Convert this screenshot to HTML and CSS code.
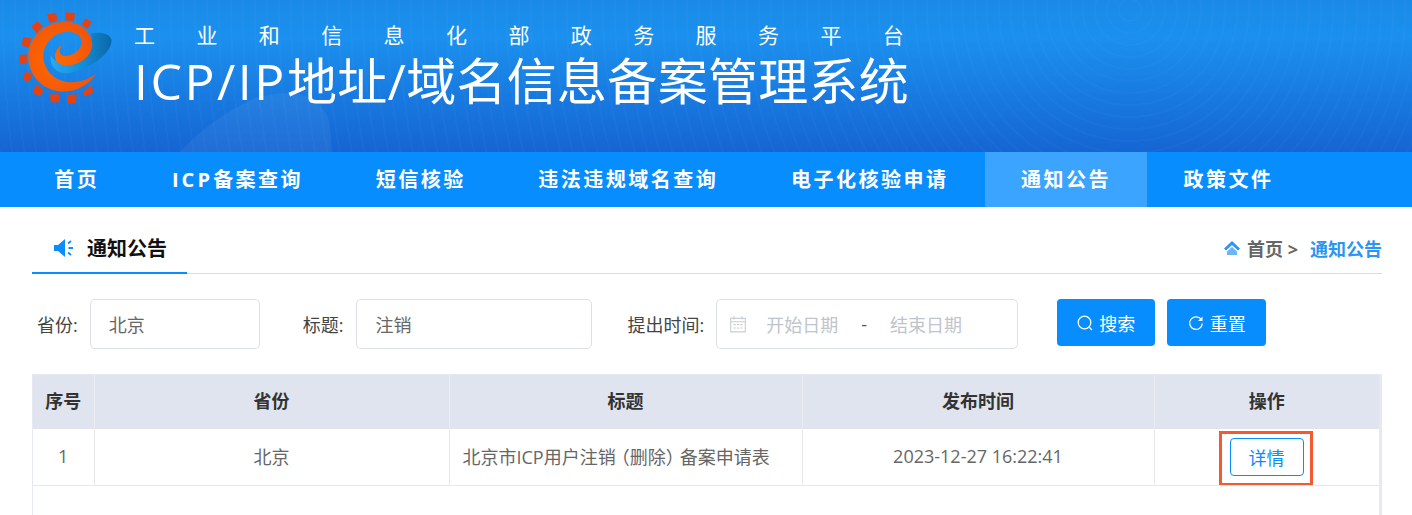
FILE: index.html
```html
<!DOCTYPE html>
<html lang="zh-CN">
<head>
<meta charset="utf-8">
<title>ICP/IP地址/域名信息备案管理系统</title>
<link rel="stylesheet" href="styles.css">
</head>
<body>
<header class="banner">
  <svg class="banner-wave" viewBox="0 0 1412 152" aria-hidden="true">
    <path d="M180 152C200 130 225 112 255 98 300 85 325 100 330 125L332 152Z" fill="#fff" fill-opacity=".055"/>
  </svg>
  <svg class="logo" viewBox="0 0 330 315" aria-hidden="true">
    <defs>
      <linearGradient id="sw" x1="0" x2="1" y1="0" y2="0">
        <stop offset="0" stop-color="#2aa9f0"/><stop offset=".45" stop-color="#1392e0"/><stop offset="1" stop-color="#0a68a8"/>
      </linearGradient>
      <radialGradient id="or" cx=".4" cy=".55" r=".6">
        <stop offset="0" stop-color="#ff6a00"/><stop offset="1" stop-color="#f2540a"/>
      </radialGradient>
    </defs>
    <g fill="#e8400f">
      <path d="M112 28L138 24 142 48 118 54Z"/><path d="M168 22L195 24 192 48 165 46Z"/>
      <path d="M228 40L245 52 232 72 215 58Z"/><path d="M82 48L98 64 80 84 64 66Z"/>
      <path d="M40 96L64 100 56 128 35 120Z"/><path d="M28 150L50 148 50 176 30 178Z"/>
      <path d="M48 198L68 210 55 232 38 222Z"/><path d="M78 238L102 255 88 275 68 262Z"/>
      <path d="M120 268L148 268 150 292 122 292Z"/><path d="M170 270L200 268 198 295 175 297Z"/>
      <path d="M245 240L250 262 225 275 218 262Z"/>
    </g>
    <path d="M122 150C118 185 140 208 175 205 230 195 305 150 305 105 300 85 270 80 242 86 255 125 225 165 180 172 150 175 130 168 122 150Z" fill="url(#sw)"/>
    <path d="M260 205C230 250 185 265 140 258 90 248 55 205 55 155 55 95 105 50 165 50 215 50 247 85 247 120 245 155 205 182 170 182 145 182 132 165 135 148 138 135 146 125 156 120 147 132 147 146 158 152 175 158 215 140 215 112 215 90 195 80 172 80 130 82 100 115 100 155 102 200 140 232 185 232 215 232 240 220 260 205Z" fill="url(#or)"/>
  </svg>
  <div class="banner-text">
    <p class="banner-sub">工业和信息化部政务服务平台</p>
    <h1 class="banner-title"><span class="title-latin">ICP/IP</span>地址/域名信息备案管理系统</h1>
  </div>
</header>
<nav class="nav">
  <a class="nav-item">首页</a>
  <a class="nav-item"><span class="latin">ICP</span>备案查询</a>
  <a class="nav-item">短信核验</a>
  <a class="nav-item">违法违规域名查询</a>
  <a class="nav-item">电子化核验申请</a>
  <a class="nav-item is-active">通知公告</a>
  <a class="nav-item">政策文件</a>
</nav>
<main class="content">
  <div class="title-bar">
    <div class="title-tab">
      <svg class="speaker" viewBox="0 0 20 20" aria-hidden="true">
        <path d="M1 7h4l7-6v18l-7-6H1z" fill="#0d8dfb"/>
        <path d="M15 5.500l3-2.500M15.500 10H20M15 14.500l3 2.500" stroke="#0d8dfb" stroke-width="1.800" fill="none"/>
      </svg>
      <span>通知公告</span>
    </div>
    <div class="crumbs">
      <svg class="home" viewBox="0 0 16 16" aria-hidden="true">
        <path d="M8 1L16 8.500 14 10.500 8 5 2 10.500 0 8.500z" fill="#2b95f5"/>
        <path d="M8 7l5 4.500V15H3v-3.500z" fill="#2b95f5" opacity=".7"/>
      </svg>
      <span class="crumb-home">首页 &gt;</span>
      <span class="crumb-current">通知公告</span>
    </div>
  </div>
  <form class="filters">
    <label class="field field-province"><span>省份:</span><span class="input">北京</span></label>
    <label class="field field-title"><span>标题:</span><span class="input">注销</span></label>
    <div class="field field-date">
      <span>提出时间:</span>
      <span class="input date">
        <svg class="cal" viewBox="0 0 16 16" aria-hidden="true">
          <path d="M1.500 3h13v12h-13zM1.500 6h13M4.500 1v3M11.500 1v3" stroke="#c9cdd6" fill="none"/>
          <path d="M4 8.500h2M7 8.500h2M10 8.500h2M4 11.500h2M7 11.500h2M10 11.500h2" stroke="#c9cdd6"/>
        </svg>
        <span class="ph">开始日期</span><span class="dash">-</span><span class="ph">结束日期</span>
      </span>
    </div>
    <button class="btn btn-search" type="button">
      <svg class="btn-icon" viewBox="0 0 16 16" aria-hidden="true"><circle cx="7.500" cy="7.500" r="6.300" stroke="#fff" stroke-width="1.300" fill="none"/><path d="M12 12l3 3" stroke="#fff" stroke-width="1.300"/></svg>搜索
    </button>
    <button class="btn btn-reset" type="button">
      <svg class="btn-icon" viewBox="0 0 16 16" aria-hidden="true"><path d="M13.500 5A6.300 6.300 0 1 0 14.300 8.500" stroke="#fff" stroke-width="1.300" fill="none"/><path d="M14.500 1.500v4.500H10z" fill="#fff"/></svg>重置
    </button>
  </form>
  <div class="table-wrap">
    <table class="table">
      <colgroup><col class="c1"><col class="c2"><col class="c3"><col class="c4"><col class="c5"></colgroup>
      <thead><tr><th>序号</th><th>省份</th><th>标题</th><th>发布时间</th><th>操作</th></tr></thead>
      <tbody>
        <tr>
          <td>1</td><td>北京</td>
          <td class="cell-title">北京市ICP用户注销<span class="paren-open">（</span>删除<span class="paren-close">）</span>备案申请表</td>
          <td>2023-12-27 16:22:41</td>
          <td class="cell-action"><div class="highlight"><button class="detail" type="button">详情</button></div></td>
        </tr>
      </tbody>
    </table>
  </div>
</main>
</body>
</html>
```
FILE: styles.css
```css
* { box-sizing: border-box; }
html, body { margin: 0; height: 515px; overflow: hidden; background: #fff; }
body { font-family: "Open Sans", "Noto Sans CJK SC", "Liberation Sans", sans-serif; color: #606266; }
p, h1 { margin: 0; }

.banner { position: relative; height: 152px; display: flex; align-items: flex-start; padding: 5px 0 0 10px; overflow: hidden;
  background: repeating-radial-gradient(circle at 1130px 10px, rgba(255,255,255,0) 0 10px, rgba(255,255,255,.018) 10px 12px), linear-gradient(180deg, #1a8ae8 0%, #1b90ee 25%, #1565d3 100%); }
.banner-wave { position: absolute; left: 0; top: 0; width: 1412px; height: 152px; }
.logo { position: relative; width: 110px; height: 105px; flex: none; }
.banner-text { position: relative; margin-left: 14px; color: #fff; }
.banner-sub { margin-top: 15px; font-size: 21px; line-height: 30px; letter-spacing: 41.4px; white-space: nowrap; font-weight: 400; }
.banner-title { font-size: 50px; line-height: 60px; font-weight: 400; letter-spacing: .3px; white-space: nowrap; margin-top: 1px; }
.title-latin { letter-spacing: 2.5px; }

.nav { height: 55px; padding-left: 18px; display: flex; background: #088dff; }
.nav-item { padding: 1px 36.3px 0; line-height: 54px; font-size: 20px; font-weight: 700; letter-spacing: 2.5px; color: #fff; white-space: nowrap; }
.latin { letter-spacing: 3.1px; }
.nav-item.is-active { background: #3aa4fe; }

.content { padding: 0 30px 0 32px; }
.title-bar { height: 67px; display: flex; justify-content: space-between; border-bottom: 1px solid #d9dbe0; }
.title-tab { width: 155px; height: 67px; padding: 16px 0 0 21px; display: flex; align-items: center; gap: 14px; border-bottom: 2px solid #088dff; font-size: 20px; font-weight: 700; color: #111; }
.speaker { width: 20px; height: 20px; }
.crumbs { display: flex; align-items: center; padding-top: 15px; font-size: 18px; font-weight: 700; }
.home { width: 16px; height: 16px; margin-right: 7px; }
.crumb-home { color: #666; margin-right: 12px; }
.crumb-current { color: #2b95f5; }

.filters { display: flex; align-items: flex-start; margin-top: 25px; height: 50px; font-size: 18px; color: #444; }
.field { display: flex; align-items: center; gap: 12px; white-space: nowrap; }
.field-province { margin-left: 5px; }
.field-title { margin-left: 43px; gap: 13px; }
.field-date { margin-left: 35px; gap: 12px; }
.input { height: 50px; display: flex; align-items: center; padding-left: 18px; border: 1px solid #dcdfe6; border-radius: 5px; color: #666; background: #fff; }
.field-province .input { width: 170px; }
.field-title .input { width: 236px; }
.date { width: 302px; padding-left: 12px; }
.cal { width: 18px; height: 18px; margin-right: 19px; }
.ph { color: #c0c4cc; }
.dash { margin: 0 23px; color: #555; }
.btn { height: 47px; display: flex; align-items: center; justify-content: center; gap: 6px; border: 0; border-radius: 4px; background: #088dff; color: #fff; font: inherit; font-size: 18px; }
.btn-search { width: 98px; margin-left: 39px; }
.btn-reset { width: 99px; margin-left: 12px; }
.btn-icon { width: 16px; height: 16px; }

.table-wrap { margin-top: 25px; width: 1350px; height: 141px; border-left: 1px solid #e6e9f3; border-right: 3px solid #e6e9f3; border-top: 1px solid #e6e9f3; }
.table { width: 100%; border-collapse: collapse; table-layout: fixed; font-size: 18px; }
.c1 { width: 61px; } .c2 { width: 355px; } .c3 { width: 353px; } .c4 { width: 352px; }
th { height: 54px; background: #e0e4ef; color: #333; font-weight: 700; border-right: 1px solid #eceef4; padding: 0 0 4px; }
td { height: 56px; text-align: center; border-right: 1px solid #e6e8ed; border-bottom: 1px solid #e6e8ed; padding: 0 0 1px; color: #666; }
th:last-child, td:last-child { border-right: 0; }
.cell-title { text-align: left; padding-left: 13px; white-space: nowrap; }
.paren-open, .paren-close { font-feature-settings: "halt"; }
.paren-open { padding-left: 5px; }
.paren-close { padding-right: 5px; }
.cell-action { vertical-align: top; padding: 0; }
.highlight { width: 94px; height: 55px; margin: 2px 0 -2px 64px; padding: 4px 6px 7px 8px; border: 3px solid #f5592f; }
.detail { display: block; width: 74px; height: 38px; border: 1px solid #088dff; border-radius: 4px; background: #fff; color: #088dff; font: inherit; font-size: 18px; padding: 0; }
```
